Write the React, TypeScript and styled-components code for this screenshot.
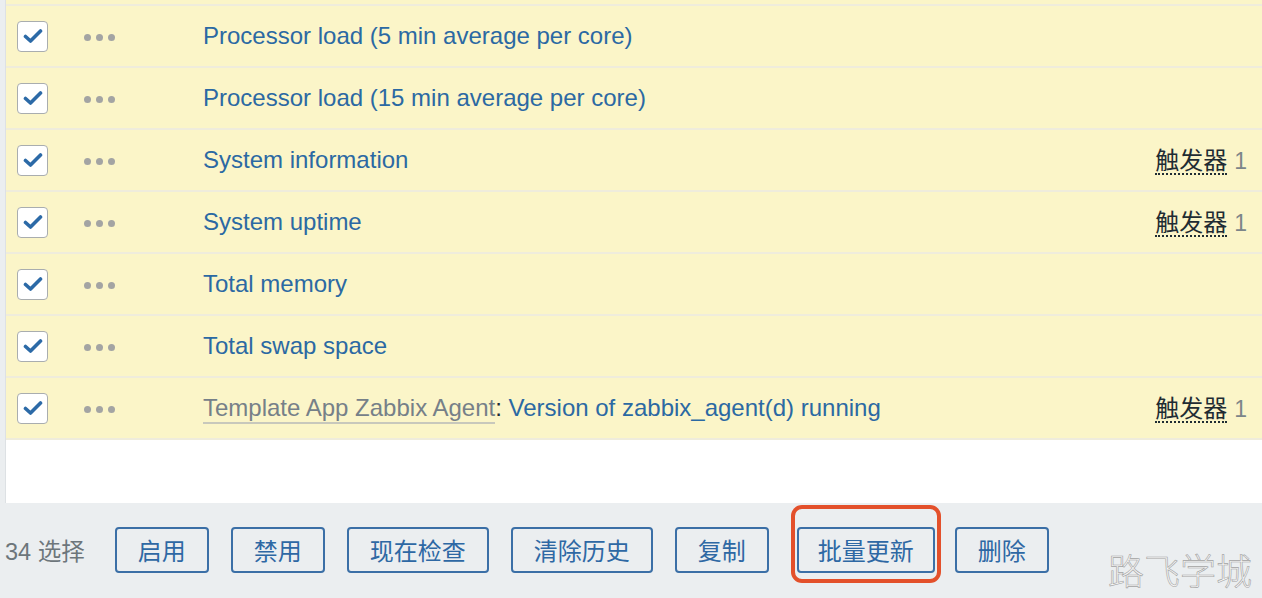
import React from "react";
import styled, { createGlobalStyle } from "styled-components";

const Global = createGlobalStyle`
  html, body { margin: 0; padding: 0; background: #ebeef0; overflow: hidden; }
  body { font-family: "Liberation Sans", Arial, "Noto Sans CJK SC", sans-serif; }
`;

const Page = styled.div`
  position: relative;
  width: 1262px;
  height: 598px;
  overflow: hidden;
  background: #ebeef0;
`;

const Panel = styled.div`
  margin-left: 5px;
  height: 503px;
  background: #ffffff;
  border-left: 1px solid #dde1e4;
`;

const PrevRowEdge = styled.div`
  height: 4px;
  background: #fbf5c8;
  border-bottom: 2px solid #efecdc;
`;

const Row = styled.div`
  display: grid;
  grid-template-columns: 67px 119px 1fr auto;
  align-items: center;
  height: 60px;
  padding: 0 15px 0 11px;
  background: #fbf5c8;
  border-bottom: 2px solid #efecdc;
`;

const Check = styled.span`
  width: 29px;
  height: 29px;
  border: 1.5px solid #a9adaf;
  border-radius: 4px;
  background: #fff;
  display: flex;
  align-items: center;
  justify-content: center;
`;

const Dots = styled.span`
  display: flex;
  gap: 5px;
  padding-top: 3px;
  span {
    width: 7px;
    height: 7px;
    border-radius: 50%;
    background: #a3a4a3;
  }
`;

const Name = styled.span`
  font-size: 24px;
  color: #2b69a3;
  white-space: nowrap;
`;

const TemplateLink = styled.span`
  color: #768088;
  border-bottom: 2px solid #c8c8bc;
  padding-bottom: 1px;
`;

const Colon = styled.span`
  color: #1f2c33;
`;

const Triggers = styled.span`
  font-size: 23px;
  white-space: nowrap;
  display: flex;
  align-items: baseline;
  gap: 7px;
`;

const TriggerLabel = styled.span`
  font-family: "Noto Sans CJK SC", sans-serif;
  font-size: 24px;
  color: #1f2c33;
  border-bottom: 2px dotted #1f2c33;
  line-height: 28px;
`;

const Count = styled.span`
  color: #7c8589;
`;

const Footer = styled.div`
  display: flex;
  align-items: center;
  padding: 24px 0 0 5px;
  gap: 22px;
  font-family: "Noto Sans CJK SC", sans-serif;
`;

const Selected = styled.span`
  font-size: 23.5px;
  color: #6d767b;
  margin-right: 8px;
  font-family: "Liberation Sans", "Noto Sans CJK SC", sans-serif;
`;

const Button = styled.button<{ $marked?: boolean }>`
  height: 46px;
  padding: 0 ${(p) => (p.$marked ? 19 : 21)}px;
  margin: 0 ${(p) => (p.$marked ? "-2px 0 6px" : "0")};
  border: 2px solid #3b6fa6;
  border-radius: 4px;
  background: transparent;
  color: #2e68a4;
  font-family: "Noto Sans CJK SC", sans-serif;
  font-size: 24px;
  line-height: 1;
  position: relative;
`;

const Highlight = styled.span`
  position: absolute;
  left: -8px;
  right: -8px;
  top: -24px;
  bottom: -12px;
  border: 4px solid #e3502b;
  border-radius: 11px;
  pointer-events: none;
`;

const Watermark = styled.div`
  position: absolute;
  right: 10px;
  bottom: 3px;
  font-family: "Noto Sans CJK SC", sans-serif;
  font-size: 36px;
  font-weight: 300;
  color: #f6f6f6;
  -webkit-text-stroke: 0.6px #a2a2a2;
`;

const CheckMark = () => (
  <svg width="20" height="16" viewBox="0 0 20 16">
    <path d="M2.5 8.5 L7.5 13 L17.5 3" fill="none" stroke="#2c6aa7" strokeWidth="3.6" strokeLinecap="round" strokeLinejoin="round" />
  </svg>
);

type Item = { name: string; template?: string; triggers?: boolean };

const items: Item[] = [
  { name: "Processor load (5 min average per core)" },
  { name: "Processor load (15 min average per core)" },
  { name: "System information", triggers: true },
  { name: "System uptime", triggers: true },
  { name: "Total memory" },
  { name: "Total swap space" },
  { name: "Version of zabbix_agent(d) running", template: "Template App Zabbix Agent", triggers: true },
];

const buttons = ["启用", "禁用", "现在检查", "清除历史", "复制", "批量更新", "删除"];
const marked = "批量更新";

export default function App() {
  return (
    <Page>
      <Global />
      <Panel>
        <PrevRowEdge />
        {items.map((it) => (
          <Row key={it.name}>
            <Check>
              <CheckMark />
            </Check>
            <Dots>
              <span />
              <span />
              <span />
            </Dots>
            <Name>
              {it.template && (
                <>
                  <TemplateLink>{it.template}</TemplateLink>
                  <Colon>: </Colon>
                </>
              )}
              {it.name}
            </Name>
            {it.triggers ? (
              <Triggers>
                <TriggerLabel>触发器</TriggerLabel>
                <Count>1</Count>
              </Triggers>
            ) : (
              <span />
            )}
          </Row>
        ))}
      </Panel>
      <Footer>
        <Selected>34 选择</Selected>
        {buttons.map((b) => (
          <Button key={b} $marked={b === marked}>
            {b}
            {b === marked && <Highlight />}
          </Button>
        ))}
      </Footer>
      <Watermark>路飞学城</Watermark>
    </Page>
  );
}
